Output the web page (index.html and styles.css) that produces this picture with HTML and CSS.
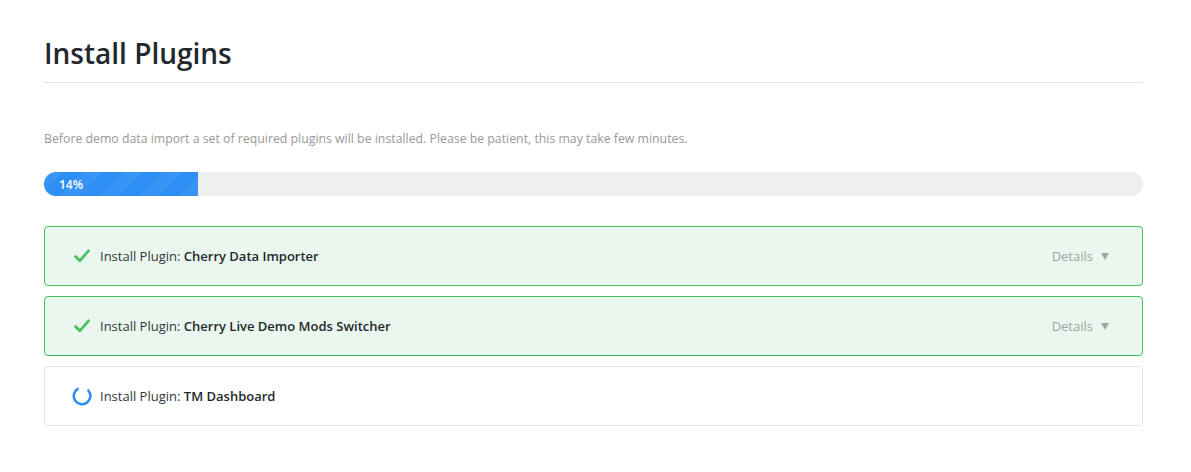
FILE: index.html
```html
<!DOCTYPE html>
<html>
<head>
<meta charset="utf-8">
<link rel="stylesheet" href="styles.css">
</head>
<body>
<div class="page">
  <h1 class="title">Install Plugins</h1>
  <p class="desc">Before demo data import a set of required plugins will be installed. Please be patient, this may take few minutes.</p>
  <div class="progress">
    <div class="progress-fill" style="width:14%"><span class="progress-label">14%</span></div>
  </div>
  <div class="list">
    <div class="item done">
      <svg class="icon" width="18" height="18" viewBox="0 0 18 18"><path d="M2.5 9.5 L6.8 13.8 L15.5 3.8" fill="none" stroke="#4cbf64" stroke-width="2.8" stroke-linecap="round" stroke-linejoin="round"/></svg>
      <span class="label">Install Plugin: <b>Cherry Data Importer</b></span>
      <span class="details">Details <span class="caret"></span></span>
    </div>
    <div class="item done">
      <svg class="icon" width="18" height="18" viewBox="0 0 18 18"><path d="M2.5 9.5 L6.8 13.8 L15.5 3.8" fill="none" stroke="#4cbf64" stroke-width="2.8" stroke-linecap="round" stroke-linejoin="round"/></svg>
      <span class="label">Install Plugin: <b>Cherry Live Demo Mods Switcher</b></span>
      <span class="details">Details <span class="caret"></span></span>
    </div>
    <div class="item">
      <svg class="icon spinner" width="20" height="20" viewBox="0 0 20 20"><path d="M5.6 2.9 A8.3 8.3 0 1 0 16.4 4.5" fill="none" stroke="#2d8ff6" stroke-width="2.6" stroke-linecap="round"/></svg>
      <span class="label">Install Plugin: <b>TM Dashboard</b></span>
    </div>
  </div>
</div>
</body>
</html>
```
FILE: styles.css
```css
html, body { margin: 0; padding: 0; background: #fff; }
body { font-family: "Open Sans", "Noto Sans", sans-serif; color: #23282d; }
.page { padding: 35px 48px 0 44px; }
.title {
  margin: 0;
  font-size: 28px;
  font-weight: 600;
  line-height: 36px;
  color: #23282d;
  padding-bottom: 11px;
  border-bottom: 1px solid #e3e3e3;
}
.desc {
  margin: 48px 0 0;
  font-size: 12.3px;
  line-height: 16px;
  color: #999;
}
.progress {
  margin-top: 25px;
  height: 24px;
  background: #efefef;
  border-radius: 12px;
  overflow: hidden;
}
.progress-fill {
  height: 100%;
  background-color: #2d8ff6;
  background-image: repeating-linear-gradient(-45deg, rgba(255,255,255,0.05) 0 14px, rgba(255,255,255,0) 14px 28px);
  display: flex;
  align-items: center;
}
.progress-label {
  color: #fff;
  font-size: 12px;
  font-weight: 600;
  padding-left: 15px;
}
.list {
  margin-top: 30px;
  display: flex;
  flex-direction: column;
  gap: 10px;
}
.item {
  height: 58px;
  border: 1px solid #e3e3e3;
  border-radius: 4px;
  display: flex;
  align-items: center;
  padding: 0 32px 0 28px;
  background: #fff;
}
.item.done { background: #eaf7ee; border-color: #46c35f; }
.icon { flex: none; margin-right: 9px; }
.icon.spinner { margin-left: -1px; margin-right: 8px; }
.label { font-size: 13px; color: #32373c; flex: 1; }
.label b { font-weight: 600; color: #23282d; }
.details {
  font-size: 13px;
  color: #a0a3a6;
  display: flex;
  align-items: center;
  margin-right: 1px;
}
.caret {
  display: inline-block;
  margin-left: 8px;
  width: 0; height: 0;
  border-left: 4.5px solid transparent;
  border-right: 4.5px solid transparent;
  border-top: 7px solid #a0a3a6;
}
```
